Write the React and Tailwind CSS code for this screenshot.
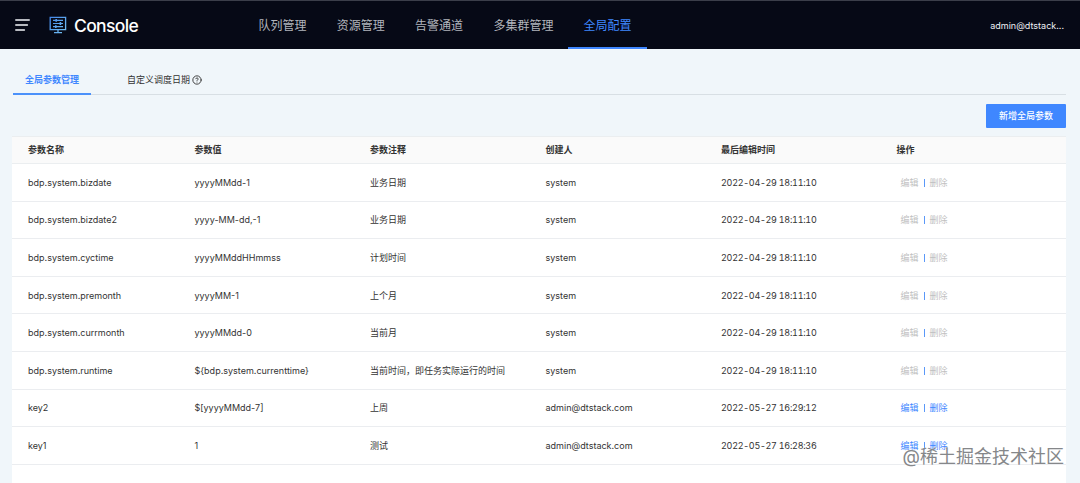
import { CircleHelp } from 'lucide-react'

const navItems = ['队列管理', '资源管理', '告警通道', '多集群管理', '全局配置']

const columns = ['参数名称', '参数值', '参数注释', '创建人', '最后编辑时间', '操作']

const rows = [
  { name: 'bdp.system.bizdate', value: 'yyyyMMdd-1', note: '业务日期', creator: 'system', time: '2022-04-29 18:11:10' },
  { name: 'bdp.system.bizdate2', value: 'yyyy-MM-dd,-1', note: '业务日期', creator: 'system', time: '2022-04-29 18:11:10' },
  { name: 'bdp.system.cyctime', value: 'yyyyMMddHHmmss', note: '计划时间', creator: 'system', time: '2022-04-29 18:11:10' },
  { name: 'bdp.system.premonth', value: 'yyyyMM-1', note: '上个月', creator: 'system', time: '2022-04-29 18:11:10' },
  { name: 'bdp.system.currmonth', value: 'yyyyMMdd-0', note: '当前月', creator: 'system', time: '2022-04-29 18:11:10' },
  { name: 'bdp.system.runtime', value: '${bdp.system.currenttime}', note: '当前时间，即任务实际运行的时间', creator: 'system', time: '2022-04-29 18:11:10' },
  { name: 'key2', value: '$[yyyyMMdd-7]', note: '上周', creator: 'admin@dtstack.com', time: '2022-05-27 16:29:12', editable: true },
  { name: 'key1', value: '1', note: '测试', creator: 'admin@dtstack.com', time: '2022-05-27 16:28:36', editable: true }
]

const gridCols = 'grid grid-cols-[166.5px_175.5px_175.5px_175.5px_175.5px_1fr] items-center pl-4'

const Logo = () => (
  <svg className="ml-[19px] h-[18px] w-[18px]" viewBox="0 0 18 18" fill="none" stroke="url(#logo)" strokeWidth="1.3">
    <defs>
      <linearGradient id="logo" x1="0" y1="0" x2="18" y2="18" gradientUnits="userSpaceOnUse">
        <stop stopColor="#3f83e8" />
        <stop offset="1" stopColor="#79c7f5" />
      </linearGradient>
    </defs>
    <path d="M1.2 1.3h15.4v12.4H1.2zM9 13.7v2.8M5 16.6h8" />
    <path d="M4 4.4h10M4 7.5h10M4 10.6h10" strokeWidth="1.2" />
    <path d="M7.2 3v2.8M11.4 6.1v2.8M6.8 9.2V12" strokeWidth="1.6" />
  </svg>
)

const Header = () => (
  <header className="flex h-[49px] items-center border-t border-[#3b3e4a] bg-[#060916] pl-[15px] pr-4">
    <svg className="h-3 w-[15px]" viewBox="0 0 15 12" fill="none" stroke="#f4f6fa" strokeWidth="1.5" strokeLinecap="round">
      <path d="M.8 1h13.4M.8 6h11.6M.8 11h8.6" />
    </svg>
    <Logo />
    <h1 className="ml-[7px] w-[93px] pt-px text-[17.5px] font-medium tracking-[-0.65px] text-white">Console</h1>
    <nav className="ml-[76.5px] flex self-stretch text-xs">
      {navItems.map((item) => (
        <a
          key={item}
          className={`flex items-center border-b-2 px-[15px] pt-[3px] ${item === '全局配置' ? 'border-[#3f87ff] text-[#3f87ff]' : 'border-transparent text-[#b2b5bd]'} ${item === '多集群管理' ? '' : 'w-[78.3px]'}`}
        >
          {item}
        </a>
      ))}
    </nav>
    <span className="ml-auto pt-px text-[9px] text-[#eef0f4]">admin@dtstack...</span>
  </header>
)

const Tabs = () => (
  <div className="ml-[13px] mr-3.5 mt-[17px] flex h-[29px] border-b border-[#d8dfe4]">
    <a className="-mb-px flex h-[29px] w-[78px] items-center justify-center border-b-2 border-[#4b91fa] pt-px font-bold text-[#3f87ff]">
      全局参数管理
    </a>
    <a className="ml-9 flex items-center gap-[2px] text-[#333]">
      自定义调度日期
      <CircleHelp className="h-2.5 w-2.5" strokeWidth={2.2} />
    </a>
  </div>
)

const ParamTable = () => (
  <div className="ml-3 mr-3.5 mt-2 flex-1 bg-white">
    <div className={`${gridCols} h-7 border-y border-[#ebeef0] bg-[#fafafa] font-bold text-[#333]`}>
      {columns.map((column) => (
        <div key={column}>{column}</div>
      ))}
    </div>
    {rows.map((row) => (
      <div key={row.name} className={`${gridCols} h-[37.6px] border-b border-[#ebedf0] pt-px`}>
        <div>{row.name}</div>
        <div>{row.value}</div>
        <div>{row.note}</div>
        <div>{row.creator}</div>
        <div className="tracking-[-0.27px] tabular-nums">{row.time}</div>
        <div className={`flex items-center pl-1 ${row.editable ? 'text-[#3f87ff]' : 'text-[#bfbfbf]'}`}>
          <a>编辑</a>
          <span className="mx-[5px] h-2 w-px bg-[#5a98f8]" />
          <a>删除</a>
        </div>
      </div>
    ))}
  </div>
)

const App = () => {
  return (
    <div className="relative flex h-[483px] w-[1080px] flex-col overflow-hidden bg-[#f0f6fa] font-['Inter','Noto_Sans_CJK_SC',sans-serif] text-[9px] leading-[14px] text-[#333]">
      <Header />
      <Tabs />
      <div className="mr-3.5 mt-[9px] flex justify-end">
        <button className="h-6 w-20 rounded-[1px] bg-[#3f87ff] font-medium text-white">新增全局参数</button>
      </div>
      <ParamTable />

      {/* Watermark over the last row */}
      <div className="absolute bottom-[14px] right-4 text-lg leading-6 text-[#85878a] [text-shadow:0_0_1px_#fff]">
        @稀土掘金技术社区
      </div>
    </div>
  )
}

export default App
